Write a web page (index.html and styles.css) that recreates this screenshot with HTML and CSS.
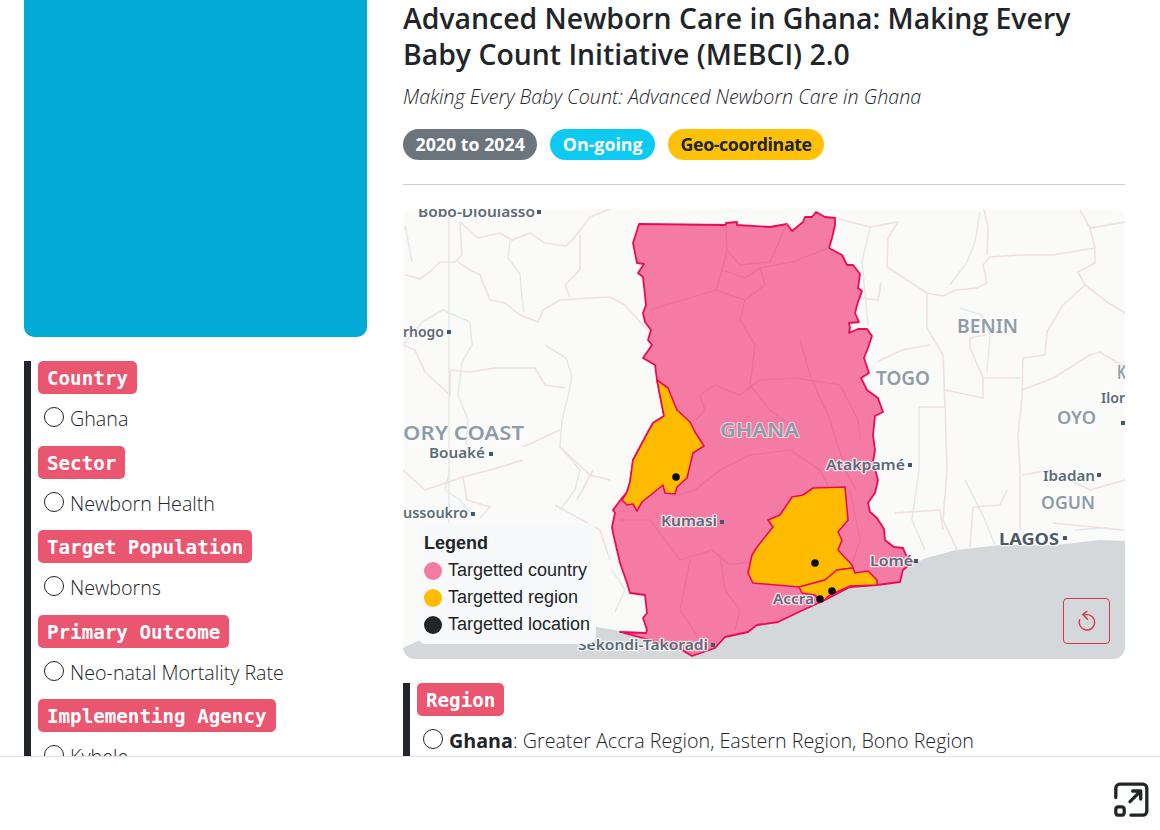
FILE: index.html
```html
<!DOCTYPE html>
<html>

<head>
    <meta name="viewport" content="width=device-width, initial-scale=1.0">
    <title>Advanced Newborn Care in Ghana</title>
    <link rel="stylesheet" href="styles.css">
</head>

<body>
    <main class="scroll-area">
        <div class="columns">
            <!-- Colonne gauche -->
            <aside class="side">
                <div class="cover"></div>
                <section class="facts">
                    <div class="fact">
                        <h6 class="tag">Country</h6>
                        <p class="item"><span class="dot"></span>Ghana</p>
                    </div>
                    <div class="fact">
                        <h6 class="tag">Sector</h6>
                        <p class="item"><span class="dot"></span>Newborn Health</p>
                    </div>
                    <div class="fact">
                        <h6 class="tag">Target Population</h6>
                        <p class="item"><span class="dot"></span>Newborns</p>
                    </div>
                    <div class="fact">
                        <h6 class="tag">Primary Outcome</h6>
                        <p class="item"><span class="dot"></span>Neo-natal Mortality Rate</p>
                    </div>
                    <div class="fact">
                        <h6 class="tag">Implementing Agency</h6>
                        <p class="item"><span class="dot"></span>Kybele</p>
                    </div>
                </section>
            </aside>

            <!-- Colonne principale -->
            <article class="content">
                <h1 class="title">Advanced Newborn Care in Ghana: Making Every Baby Count Initiative (MEBCI) 2.0</h1>
                <p class="subtitle">Making Every Baby Count: Advanced Newborn Care in Ghana</p>
                <div class="badges">
                    <span class="badge badge-grey">2020 to 2024</span>
                    <span class="badge badge-cyan">On-going</span>
                    <span class="badge badge-yellow">Geo-coordinate</span>
                </div>
                <hr class="divider">

                <div class="map">
                    <svg class="map-svg" viewBox="403 209 722 450" xmlns="http://www.w3.org/2000/svg">
                        <rect class="land" x="403" y="209" width="722" height="450"/>

                        <!-- Rivières -->
                        <g class="rivers">
                            <path d="M510,240 L508,258 L520,274 L522,298 L524,312"/>
                            <path d="M403,345 L422,322 L443,310 L470,322 L472,345 L462,362 L458,395 L468,420 L466,445"/>
                            <path d="M545,345 L566,358 L572,376 L568,396 L562,420 L560,447 L580,470 L575,490 L560,510"/>
                            <path d="M449,209 L449,525"/>
                            <path d="M450,470 L445,490 L460,500 L472,515"/>
                            <path d="M405,225 L412,262"/>
                            <path d="M950,285 L967,262 L975,242 L980,212"/>
                            <path d="M960,308 L982,315 L990,335 L987,372"/>
                            <path d="M870,227 L862,262 L868,325"/>
                            <path d="M919,407 L919,470 L912,520 L925,550"/>
                            <path d="M965,480 L985,520 L995,545"/>
                            <path d="M1075,530 L1100,528 L1125,530"/>
                            <path d="M612,570 L625,590 L615,612"/>
                        </g>

                        <!-- Frontières -->
                        <g class="borders">
                            <path d="M460,222 L478,238 L500,233 L512,240 L530,233 L545,243 L566,246 L574,238 L590,217 L610,209"/>
                            <path d="M460,222 L462,255 L455,262 L440,262 L432,270 L420,279 L405,275"/>
                            <path d="M458,262 L470,270 L480,275 L490,300 L505,303 L520,315 L538,322 L543,310 L560,300 L590,298 L610,297 L625,305 L640,322 L650,332"/>
                            <path d="M580,235 L580,270 L565,285 L570,297"/>
                            <path d="M403,345 L415,350 L425,372 L450,395 L450,370 L470,372"/>
                            <path d="M470,372 L495,368 L535,368 L545,385 L565,388"/>
                            <path d="M523,447 L560,430 M523,460 L490,470 L463,477"/>
                            <path d="M593,470 L577,500 M560,447 L590,475 L610,480"/>
                            <path d="M403,470 L425,490 L463,477 L467,500 L490,507 L480,518"/>
                            <path d="M555,505 L600,530 L610,560"/>
                            <path d="M835,218 L870,227 L898,222 L888,238 L887,267 L927,293"/>
                            <path d="M927,293 L927,328 L943,355 L945,405 L947,470 L943,520 L957,550"/>
                            <path d="M927,293 L943,296 L955,290 L977,288 L987,283 L983,265 L990,257 L1020,255 L1053,255 L1095,248 L1095,263 L1078,272 L1085,285 L1107,302 L1125,313"/>
                            <path d="M983,205 L988,228 L987,255"/>
                            <path d="M1080,210 L1090,228 L1095,248 M1090,228 L1125,222"/>
                            <path d="M1085,285 L1063,305 L1047,332 L1045,355 L1023,358 L1022,398 L1018,435 L1020,470 L1020,530"/>
                            <path d="M1022,390 L1053,378 L1090,355 L1100,352 L1125,367"/>
                            <path d="M983,378 L1020,378 M983,378 L970,348 L970,338 L986,335 M945,390 L983,398 L983,378"/>
                            <path d="M881,283 L878,300 L860,298"/>
                            <path d="M877,362 L902,350 L930,345"/>
                            <path d="M918,407 L945,407"/>
                            <path d="M895,513 L940,510 L943,530 M973,507 L1000,505 L1007,490 M973,507 L970,547"/>
                            <path d="M1053,523 L1123,530 M1022,475 L1050,470 L1090,490 L1125,480"/>
                        </g>

                        <!-- Océan -->
                        <path class="sea" d="M1125,541 L1100,540 L1056,545 L1000,545 L956,550 L926,558 L906,567 L900,582 L850,587 L823,601 L803,610 L778,622 L757,625 L725,637 L715,648 L692,656 L682,650 L620,631 L597,627 L420,640 L403,648 L403,659 L1125,659 Z"/>

                        <!-- Ghana -->
                        <path class="country" d="M639,224 L726,225 L726,223 L737,222 L737,225 L770,227 L787,224 L792,231 L803,222 L805,217 L812,217 L816,212 L825,217 L835,218 L835,225 L832,238 L829,248 L842,255 L847,265 L853,265 L860,274 L858,288 L862,291 L858,302 L855,313 L859,322 L849,323 L850,328 L849,333 L858,329 L867,329 L872,336 L868,348 L864,358 L869,373 L861,378 L867,390 L878,398 L883,412 L875,416 L873,435 L875,450 L873,462 L878,480 L875,493 L868,503 L870,512 L877,518 L884,529 L885,540 L894,547 L903,548 L906,555 L913,562 L903,570 L900,582 L877,585 L850,587 L823,601 L803,610 L778,622 L757,625 L748,632 L725,637 L715,648 L692,656 L682,650 L650,640 L620,632 L646,633 L647,630 L643,618 L647,613 L645,595 L630,593 L627,583 L620,563 L613,533 L612,527 L615,513 L613,510 L622,498 L627,492 L630,482 L633,460 L648,432 L653,423 L664,416 L657,380 L655,365 L643,358 L652,345 L648,340 L651,330 L645,322 L643,313 L646,305 L643,277 L638,273 L644,264 L637,263 L633,243 Z"/>

                        <!-- Régions de Ghana -->
                        <g class="districts">
                            <path d="M726,225 L727,250 L740,265 L770,262 L787,224"/>
                            <path d="M727,250 L722,270 L716,290 L650,310"/>
                            <path d="M722,270 L745,278 L760,268 L792,262 L829,248"/>
                            <path d="M760,268 L765,285 L745,300 L740,320 L755,345 L750,385 L770,410 L790,425"/>
                            <path d="M716,290 L745,300"/>
                            <path d="M700,395 L715,385 L740,395 L760,380 L795,378 L840,385 L858,420 L860,440"/>
                            <path d="M696,420 L705,410 L700,395"/>
                            <path d="M800,340 L810,375 L830,420 L845,470 L856,490"/>
                            <path d="M675,496 L695,490 L720,470 L750,455 L790,450 L820,470 L830,490"/>
                            <path d="M620,520 L650,520 L680,560 L712,550 L730,565 L760,560"/>
                            <path d="M690,560 L680,610 L700,640"/>
                            <path d="M720,555 L725,590 L740,610 L735,630"/>
                            <path d="M850,490 L860,540 L852,565"/>
                        </g>

                        <path class="region" d="M657,380 L668,388 L677,410 L690,422 L695,432 L704,446 L693,453 L687,478 L677,487 L675,494 L665,493 L663,485 L642,502 L637,511 L633,504 L627,505 L622,500 L627,492 L630,482 L633,460 L648,432 L653,423 L664,416 Z"/>
                        <path class="region" d="M813,488 L845,487 L848,520 L838,532 L842,540 L838,550 L852,565 L853,568 L837,570 L825,580 L800,587 L753,583 L748,573 L752,555 L757,547 L773,527 L768,520 L780,515 L792,497 L803,495 Z"/>
                        <path class="region" d="M837,570 L853,568 L855,573 L868,571 L877,580 L877,585 L850,586 L830,595 L822,602 L815,595 L802,593 L799,587 L825,580 Z"/>

                        <circle class="spot" cx="676" cy="477" r="3.8"/>
                        <circle class="spot" cx="815" cy="563" r="3.8"/>
                        <circle class="spot" cx="832" cy="591" r="3.8"/>
                        <circle class="spot" cx="820" cy="599" r="3.8"/>

                        <!-- Noms sur la carte -->
                        <g class="city">
                            <text x="418" y="217" textLength="117" lengthAdjust="spacingAndGlyphs">Bobo-Dioulasso</text>
                            <text x="403" y="337" textLength="41" lengthAdjust="spacingAndGlyphs">rhogo</text>
                            <text x="429" y="458" textLength="56" lengthAdjust="spacingAndGlyphs">Bouaké</text>
                            <text x="403" y="518" textLength="65" lengthAdjust="spacingAndGlyphs">ussoukro</text>
                            <text class="on-pink" x="661" y="526" textLength="56" lengthAdjust="spacingAndGlyphs">Kumasi</text>
                            <text class="on-pink" x="826" y="470" textLength="79" lengthAdjust="spacingAndGlyphs">Atakpamé</text>
                            <text class="on-pink" x="870" y="566" textLength="43" lengthAdjust="spacingAndGlyphs">Lomé</text>
                            <text class="on-pink" x="773" y="604" textLength="41" lengthAdjust="spacingAndGlyphs">Accra</text>
                            <text x="1043" y="481" textLength="52" lengthAdjust="spacingAndGlyphs">Ibadan</text>
                            <text x="1101" y="403" textLength="24" lengthAdjust="spacingAndGlyphs">Ilor</text>
                            <text class="on-pink" x="578" y="650" textLength="130" lengthAdjust="spacingAndGlyphs">Sekondi-Takoradi</text>
                            <text class="big-city" x="999" y="545" textLength="60" lengthAdjust="spacingAndGlyphs">LAGOS</text>
                        </g>
                        <g class="zone">
                            <text x="403" y="440" textLength="121" lengthAdjust="spacingAndGlyphs">ORY COAST</text>
                            <text class="on-pink" x="720" y="437" textLength="79" lengthAdjust="spacingAndGlyphs">GHANA</text>
                            <text x="876" y="385" textLength="54" lengthAdjust="spacingAndGlyphs">TOGO</text>
                            <text x="957" y="333" textLength="61" lengthAdjust="spacingAndGlyphs">BENIN</text>
                            <text x="1117" y="379" textLength="9" lengthAdjust="spacingAndGlyphs">K</text>
                            <text class="small-zone" x="1057" y="424" textLength="39" lengthAdjust="spacingAndGlyphs">OYO</text>
                            <text class="small-zone" x="1041" y="509" textLength="54" lengthAdjust="spacingAndGlyphs">OGUN</text>
                        </g>
                        <g class="pins">
                            <rect x="537" y="210" width="4" height="4"/>
                            <rect x="447" y="330" width="4" height="4"/>
                            <rect x="489" y="452" width="4" height="4"/>
                            <rect x="471" y="512" width="4" height="4"/>
                            <rect x="720" y="520" width="4" height="4"/>
                            <rect x="908" y="463" width="4" height="4"/>
                            <rect x="914" y="559" width="4" height="4"/>
                            <rect x="1097" y="473" width="4" height="4"/>
                            <rect x="1063" y="536" width="4" height="4"/>
                            <rect x="1121" y="421" width="4" height="4"/>
                            <rect x="711" y="643" width="4" height="4"/>
                        </g>
                    </svg>

                    <div class="legend">
                        <strong class="legend-title">Legend</strong>
                        <div class="legend-row"><span class="swatch swatch-country"></span>Targetted country</div>
                        <div class="legend-row"><span class="swatch swatch-region"></span>Targetted region</div>
                        <div class="legend-row"><span class="swatch swatch-location"></span>Targetted location</div>
                    </div>

                    <button class="reset" type="button" aria-label="Reset">
                        <svg width="20" height="20" viewBox="0 1 20 20" fill="none" stroke="currentColor" stroke-width="1.4" stroke-linecap="round" stroke-linejoin="round">
                            <path d="M5.8 4.6H10A7.7 7.7 0 1 1 2.7 9.7"/>
                            <path d="M10.5 .7 5.8 4.6l4.7 4.7"/>
                        </svg>
                    </button>
                </div>

                <section class="facts facts-wide">
                    <div class="fact">
                        <h6 class="tag">Region</h6>
                        <p class="item"><span class="dot"></span><span><b>Ghana</b>: Greater Accra Region, Eastern Region, Bono Region</span></p>
                    </div>
                </section>
            </article>
        </div>
    </main>

    <footer class="bottom-bar">
        <button class="expand" type="button" aria-label="Exit fullscreen">
            <svg width="38" height="38" viewBox="0 0 38 38" fill="none" stroke="currentColor" stroke-width="3.3" stroke-linecap="round" stroke-linejoin="round">
                <path d="M3.8 16.5V7.2a4 4 0 0 1 4-4h23a4 4 0 0 1 4 4v23a4 4 0 0 1-4 4H19"/>
                <rect x="3.8" y="25.8" width="8.4" height="8.4" rx="2.5"/>
                <path d="M18 20.7 28.7 10M20.7 10h8v8"/>
            </svg>
        </button>
    </footer>
</body>

</html>
```

FILE: styles.css
```css
/* Style général */
* {
    box-sizing: border-box;
}

html,
body {
    margin: 0;
    padding: 0;
    height: 100%;
    overflow: hidden;
}

body {
    background: #fff;
    color: #212529;
    font-family: "Open Sans", "Noto Sans", sans-serif;
    display: flex;
    flex-direction: column;
}

.scroll-area {
    height: 756px;
    overflow: hidden;
    flex: none;
}

.columns {
    display: grid;
    grid-template-columns: 343px 722px;
    column-gap: 36px;
    padding-left: 24px;
}

/* Colonne gauche */
.cover {
    height: 337px;
    background: #00aad4;
    border-radius: 0 0 10px 10px;
    margin-bottom: 24px;
}

.facts {
    border-left: 7px solid #212529;
    padding-left: 7px;
}

.fact {
    padding-bottom: 12.5px;
}

.tag {
    display: block;
    width: fit-content;
    margin: 0;
    padding: 1px 9px 0;
    height: 33px;
    line-height: 33px;
    border-radius: 5px;
    background: #ea5670;
    color: #fff;
    font-family: "DejaVu Sans Mono", "Liberation Mono", monospace;
    font-size: 19.2px;
    font-weight: 700;
}

.item {
    display: flex;
    align-items: center;
    gap: 6px;
    margin: 11px 0 0 6px;
    font-size: 19.7px;
    font-weight: 300;
    line-height: 28px;
    white-space: nowrap;
}

.item b {
    font-weight: 700;
}

.dot {
    flex: none;
    width: 20px;
    height: 20px;
    border: 1.6px solid #212529;
    border-radius: 50%;
    margin-top: -4px;
}

/* Colonne principale */
.title {
    margin: 0;
    font-size: 28.4px;
    font-weight: 600;
    line-height: 36px;
}

.subtitle {
    margin: 11px 0 0;
    font-size: 19.7px;
    font-weight: 300;
    font-style: italic;
    line-height: 28px;
}

.badges {
    display: flex;
    gap: 13px;
    margin-top: 18px;
}

.badge {
    height: 31px;
    line-height: 31px;
    padding: 0 12.5px;
    border-radius: 16px;
    font-size: 17.8px;
    font-weight: 700;
    white-space: nowrap;
}

.badge-grey {
    background: #6c757d;
    color: #fff;
}

.badge-cyan {
    background: #0dcaf0;
    color: #fff;
}

.badge-yellow {
    background: #ffc107;
    color: #212529;
    letter-spacing: -.4px;
}

.divider {
    margin: 24px 0;
    border: 0;
    border-top: 1px solid #ccc;
}

/* Carte */
.map {
    position: relative;
    height: 450px;
    border-radius: 12px;
    overflow: hidden;
    margin-bottom: 24px;
}

.map-svg {
    display: block;
    width: 100%;
    height: 100%;
}

.land {
    fill: #fafaf8;
}

.sea {
    fill: #d4d8db;
}

.rivers,
.borders,
.districts {
    filter: blur(.4px);
}

.rivers path,
.borders path,
.districts path {
    fill: none;
    stroke-linejoin: round;
}

.rivers path {
    stroke: #e3e9ea;
    stroke-width: 1.5;
}

.borders path {
    stroke: #f0e0e3;
    stroke-width: 1.6;
}

.districts path {
    stroke: #ea7199;
    stroke-width: 1.2;
}

.country {
    fill: #f47ba3;
    stroke: #ec0a55;
    stroke-width: 1.8;
    stroke-linejoin: round;
}

.region {
    fill: #ffbb00;
    stroke: #ec0a55;
    stroke-width: 1.6;
    stroke-linejoin: round;
}

.spot {
    fill: #0c0c0c;
}

.city text,
.zone text {
    font-family: "Noto Sans", sans-serif;
    paint-order: stroke;
    stroke-linejoin: round;
}

.city text {
    font-size: 14px;
    font-weight: 600;
    fill: #5c6b78;
    stroke: rgba(255, 255, 255, .75);
    stroke-width: 2.5px;
}

.city .big-city {
    font-size: 16px;
    font-weight: 700;
    fill: #4d5a66;
}

.zone text {
    font-size: 19px;
    font-weight: 600;
    fill: #8f9ca8;
    stroke: rgba(255, 255, 255, .6);
    stroke-width: 2px;
}

.zone .small-zone {
    font-size: 17px;
}

.pins rect {
    fill: #44586c;
}

.legend {
    position: absolute;
    left: 15px;
    bottom: 15px;
    width: 178px;
    height: 121px;
    padding: 7px 6px;
    background: #f8f9fa;
    border-radius: 8px;
    font-family: "Liberation Sans", Arial, sans-serif;
    font-size: 18px;
    color: #212529;
}

.legend-title {
    display: block;
    line-height: 27px;
}

.legend-row {
    display: flex;
    align-items: center;
    gap: 6px;
    height: 27px;
    white-space: nowrap;
}

.swatch {
    flex: none;
    width: 18px;
    height: 18px;
    border-radius: 50%;
}

.swatch-country {
    background: #f47ba3;
}

.swatch-region {
    background: #ffbb00;
}

.swatch-location {
    background: #212529;
}

.reset {
    position: absolute;
    right: 15px;
    bottom: 15px;
    width: 47px;
    height: 46px;
    display: flex;
    align-items: center;
    justify-content: center;
    padding: 0;
    background: transparent;
    border: 1px solid #dc3545;
    border-radius: 4px;
    color: #dc3545;
}

/* Barre du bas */
.bottom-bar {
    flex: 1;
    display: flex;
    justify-content: flex-end;
    align-items: center;
    padding: 12px 10px 0 0;
    border-top: 1px solid #dee2e6;
}

.expand {
    display: flex;
    padding: 0;
    background: none;
    border: 0;
    color: #212529;
}
```
